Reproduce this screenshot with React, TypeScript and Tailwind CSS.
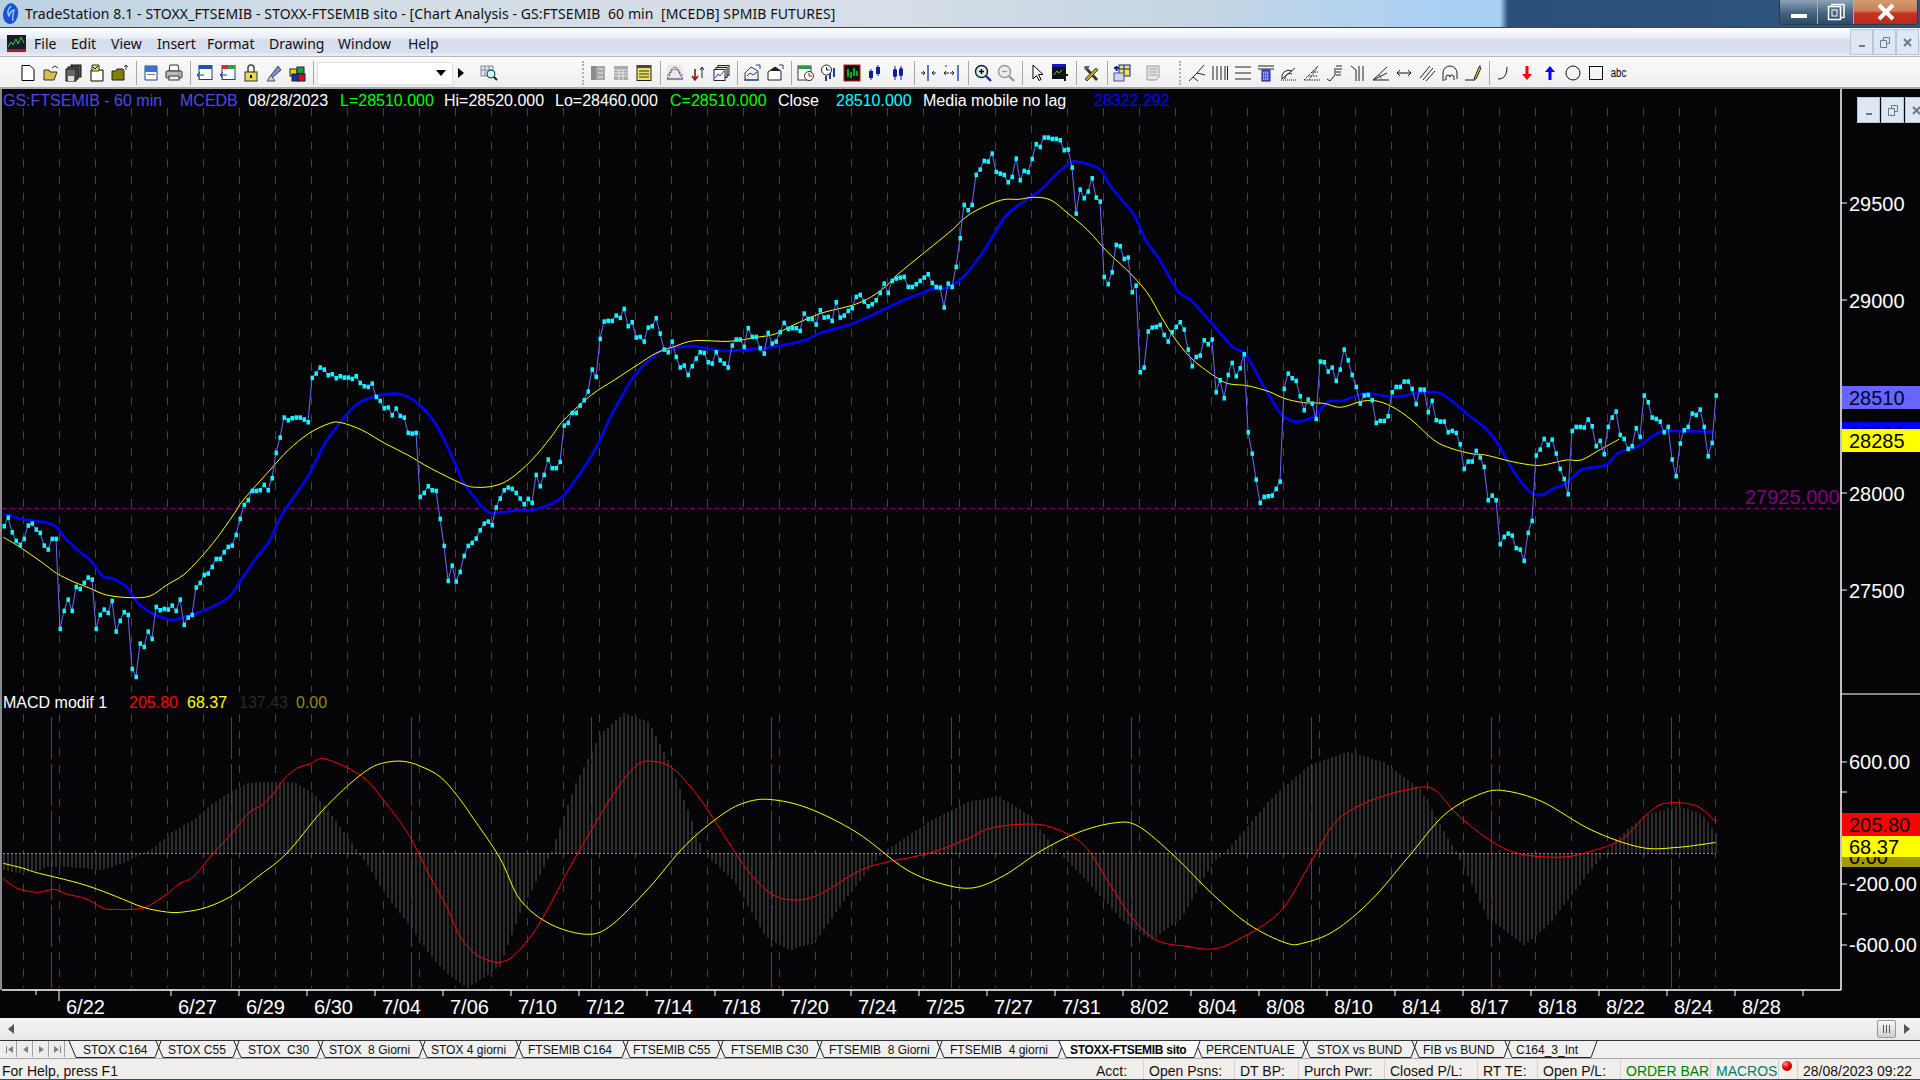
import React from "react";

type P = [number, number];
const pairs = (n: number[], f: (x: number, y: number) => P): P[] => {
  const o: P[] = [];
  for (let i = 0; i + 1 < n.length; i += 2) o.push(f(n[i], n[i + 1]));
  return o;
};
const fa = (x: number, y: number): P => [x / 3, 480 + y / 3];
const fb = (x: number, y: number): P => [270 + x / 2.178, 280 + y / 3];
const fc = (x: number, y: number): P => [950 + x / 2.036, 120 + y / 3];
const fd = (x: number, y: number): P => [x * 1.2245, y * 1.2245];
const fm = (x: number, y: number): P => [x / 3, 680 + y / 3];

const dotsA = pairs([10,138,22,112,34,156,46,182,58,194,70,176,82,136,94,130,106,148,118,158,130,196,142,208,154,176,166,176,178,446,190,392,202,358,214,392,226,320,238,326,250,308,262,292,274,298,286,446,298,404,310,388,322,398,334,362,346,454,358,422,370,396,382,404,394,566,406,590,418,490,430,500,442,454,454,476,466,380,478,390,490,386,502,388,514,376,526,392,538,358,550,434,562,412,574,404,586,322,598,308,610,284,622,280,634,260,646,236,658,236,670,216,682,200,694,196,706,164,718,116,730,74,742,60,754,32,766,32,778,30,790,14,802,30], fa);
const dotsB = pairs([4,594,11,518,20,472,29,412,38,420,47,414,55,412,64,412,73,418,82,426,90,293,98,280,107,262,116,268,125,285,134,282,143,294,151,288,160,292,169,292,178,296,186,288,195,308,204,318,213,320,221,310,230,350,239,362,247,384,256,382,265,405,274,385,282,407,291,412,300,458,309,460,317,458,326,650,334,638,343,618,352,630,360,632,369,716,378,797,387,902,395,856,404,904,413,875,421,827,430,797,439,788,448,775,456,750,465,730,474,724,483,735,491,682,499,655,508,630,517,622,526,626,535,638,543,655,552,672,561,656,569,668,578,584,586,618,595,584,604,538,612,564,621,564,630,545,638,436,647,428,656,398,665,398,673,376,682,360,691,334,699,268,708,290,717,176,726,124,734,122,743,122,752,106,760,113,769,86,778,138,787,126,796,172,804,170,813,184,822,142,831,138,839,114,848,160,857,208,866,216,874,184,883,230,892,262,900,256,909,284,918,258,927,235,935,216,944,218,953,246,961,250,970,216,979,240,988,250,997,262,1005,196,1014,178,1023,178,1031,200,1040,144,1049,170,1058,170,1066,204,1075,220,1084,158,1092,190,1101,184,1110,156,1118,128,1127,146,1136,144,1145,144,1153,152,1162,100,1171,116,1180,116,1188,133,1197,90,1206,112,1214,110,1223,122,1232,66,1241,112,1250,106,1258,92,1267,84,1276,50,1284,44,1293,64,1302,78,1310,72,1319,60,1328,38,1337,10,1345,38,1354,2,1362,-5,1371,-8,1380,-10,1388,20,1397,20,1406,12,1414,2,1423,-8,1432,-18,1440,8,1449,20,1458,22,1466,82,1475,10], fb);
const dotsC = pairs([3,500,10,440,18,354,26,254,35,270,43,254,51,164,59,148,67,122,75,124,84,100,92,155,100,160,108,164,116,186,124,170,132,115,141,180,149,152,157,156,165,116,173,72,181,80,189,52,197,52,206,56,214,56,222,60,230,90,238,88,246,142,255,280,263,208,271,234,279,214,287,174,295,232,303,244,312,470,320,492,328,456,336,374,344,378,352,416,360,412,368,516,378,496,386,756,393,742,401,634,409,622,417,620,426,614,434,644,442,664,450,636,458,620,466,606,474,628,484,688,491,738,499,710,507,706,515,660,523,672,531,658,540,816,548,780,556,834,564,764,572,728,580,768,588,744,597,702,605,936,613,1000,621,1078,629,1148,637,1130,645,1128,653,1126,661,1106,669,1084,678,806,686,760,694,774,703,782,711,828,719,870,727,838,735,850,743,896,751,724,759,726,767,754,776,742,784,782,792,748,800,688,808,720,816,764,825,800,833,850,841,826,849,824,857,840,865,908,873,902,881,902,889,888,898,816,906,800,914,800,922,784,930,784,938,806,946,852,954,808,962,808,970,876,979,842,987,900,995,904,1003,904,1011,936,1019,932,1027,938,1037,972,1045,1046,1053,1024,1061,1024,1069,992,1077,1012,1085,1040,1094,1140,1102,1126,1110,1140,1118,1272,1126,1250,1134,1240,1142,1246,1150,1284,1158,1288,1167,1322,1175,1238,1183,1202,1191,1006,1199,988,1207,956,1215,974,1223,958,1232,1000,1240,1046,1248,1076,1256,1122,1265,932,1273,920,1281,920,1289,922,1297,898,1305,918,1313,978,1321,962,1330,1002,1338,920,1346,892,1354,874,1362,944,1370,956,1379,986,1387,978,1395,924,1403,950,1411,826,1419,846,1428,892,1436,896,1444,904,1452,936,1460,920,1468,1018,1476,1068,1484,970,1493,930,1501,920,1509,880,1517,884,1525,868,1533,920,1542,1008,1550,968,1558,826], fc);
const price: P[] = [...dotsA, ...dotsB, ...dotsC].map(([x, y]) => [Math.round(x / 4) * 4, y] as P);

const blue: P[] = [
  ...pairs([10,102,25,104,60,116,100,122,140,128,168,140,190,168,230,208,270,240,290,265,310,290,340,296,380,320,400,350,420,375,460,402,490,413,520,420,550,412,590,400,650,374,690,348,720,305,770,232,805,190], fa),
  ...pairs([0,780,30,695,80,595,120,490,160,415,190,372,225,350,260,341,290,345,320,368,360,430,400,540,420,605,450,660,475,697,500,698,540,690,575,689,630,658,660,610,690,550,715,490,740,415,770,340,795,285,830,235,860,208,900,200,925,198,960,207,1000,213,1060,206,1100,200,1160,183,1200,158,1260,135,1320,100,1380,60,1420,40,1440,28,1470,24], fb),
  ...pairs([0,500,20,480,45,440,70,390,95,330,115,285,150,245,185,210,215,165,245,128,265,127,305,148,325,195,350,240,375,285,400,365,425,415,465,515,490,540,530,605,575,680,600,700,630,775,670,875,695,902,720,902,745,885,770,845,800,842,845,820,900,830,950,820,985,816,1010,830,1060,890,1090,925,1115,970,1150,1060,1185,1120,1210,1122,1230,1105,1255,1090,1285,1050,1335,1035,1360,1000,1400,980,1440,940,1465,933,1555,935], fc),
];
const yellow: P[] = [
  ...pairs([10,172,50,195,90,222,130,250,170,280,220,305,270,325,320,345,390,353,450,348,500,315,550,285,600,235,650,175,700,105,730,60,780,0], fa).slice(0, 16),
  ...pairs([0,570,40,510,85,460,130,430,155,428,200,450,250,490,300,525,350,565,420,612,450,622,490,617,525,595,570,540,610,475,640,420,700,345,750,300,800,255,840,220,880,200,925,182,1000,184,1060,172,1100,162,1140,135,1200,100,1270,75,1310,50,1345,15,1370,-20], fb),
  ...pairs([0,335,25,300,55,270,105,240,140,238,170,232,205,240,240,280,280,330,320,395,360,450,400,515,430,590,460,660,495,720,545,775,570,792,605,797,650,815,680,835,720,848,760,850,795,862,835,845,865,842,900,860,940,900,985,960,1020,985,1065,1002,1090,1005,1145,1025,1190,1036,1215,1033,1255,1020,1285,1020,1320,992,1362,958], fc),
];
const macdRed: P[] = [
  ...pairs([10,595,30,612,60,628,110,637,140,632,165,628,200,642,260,657,310,685,350,688,400,688,440,680,500,643,540,610,580,590,640,520,700,455,745,400,790,372,825,335,850,300,890,265,930,252,955,238,980,238,1040,262,1100,300,1150,360,1200,425,1235,480,1290,590,1340,680,1380,770,1430,825,1480,845,1500,847], fm),
  ...pairs([420,780,440,755,470,700,500,650,520,625,535,622,550,628,570,650,590,680,610,710,630,730,650,735,670,730,700,712,720,705,745,700,765,695,790,685,810,676,840,673,860,676,885,690,905,720,925,750,945,768,970,773,990,775,1010,768,1045,745,1070,705,1090,672,1110,658,1130,650,1150,645,1170,644,1190,665,1215,685,1240,697,1275,700,1300,695,1325,685,1345,665,1360,656,1385,658,1401,671], fd),
];
const macdYellow: P[] = [
  ...pairs([10,550,70,565,110,578,200,600,270,620,350,650,430,682,500,696,550,696,620,682,700,645,780,585,860,520,960,400,1040,320,1110,265,1160,247,1210,244,1260,258,1320,290,1370,345,1420,415,1500,535], fm),
  ...pairs([425,735,450,755,480,763,500,755,530,725,560,690,590,665,610,655,630,653,660,660,700,680,740,710,770,722,795,725,820,715,850,695,880,680,910,672,930,675,960,700,990,730,1020,755,1050,770,1065,770,1090,760,1120,735,1150,700,1180,665,1210,648,1230,646,1260,655,1300,678,1340,692,1370,692,1401,688], fd),
];
const histEnv: P[] = [
  ...pairs([10,570,60,580,100,575,150,560,220,562,300,570,370,550,430,520,460,505,510,460,580,420,640,370,700,330,745,308,830,305,880,305,940,340,980,385,1020,440,1060,495,1075,519,1100,550,1160,650,1230,735,1290,825,1340,880,1400,925,1450,895,1500,860], fm),
  ...pairs([425,745,450,697,470,640,490,600,510,582,530,590,550,630,575,697,600,720,625,765,645,776,665,770,690,735,720,697,760,670,790,655,815,650,840,665,865,697,890,722,915,750,940,768,965,750,990,705,1000,697,1040,650,1070,625,1100,614,1130,622,1160,645,1190,697,1215,750,1245,772,1265,755,1300,710,1320,685,1345,665,1370,658,1390,665,1401,680], fd),
];
const env = (x: number) => {
  for (let i = 1; i < histEnv.length; i++) {
    const [x0, y0] = histEnv[i - 1];
    const [x1, y1] = histEnv[i];
    if (x <= x1) return y0 + ((Math.max(x, x0) - x0) / (x1 - x0)) * (y1 - y0);
  }
  return histEnv[histEnv.length - 1][1];
};
const poly = (p: P[]) => p.map(([x, y]) => `${x.toFixed(1)},${y.toFixed(1)}`).join(" ");
const smooth = (p: P[]) => {
  let d = `M${p[0][0].toFixed(1)} ${p[0][1].toFixed(1)}`;
  for (let i = 0; i + 1 < p.length; i++) {
    const a = p[Math.max(i - 1, 0)];
    const b = p[i];
    const c = p[i + 1];
    const e = p[Math.min(i + 2, p.length - 1)];
    const c1x = b[0] + (c[0] - a[0]) / 6;
    const c1y = b[1] + (c[1] - a[1]) / 6;
    const c2x = c[0] - (e[0] - b[0]) / 6;
    const c2y = c[1] - (e[1] - b[1]) / 6;
    d += `C${c1x.toFixed(1)} ${c1y.toFixed(1)} ${c2x.toFixed(1)} ${c2y.toFixed(1)} ${c[0].toFixed(1)} ${c[1].toFixed(1)}`;
  }
  return d;
};
const range = (n: number) => Array.from({ length: n }, (_, i) => i);
const grid = range(48).map((k) => 23.5 + 36 * k);
const teal = range(10).map((k) => 51.5 + 180 * k);
const bars = range(429).map((k) => 4 + 4 * k);
const dates = ["6/27","6/29","6/30","7/04","7/06","7/10","7/12","7/14","7/18","7/20","7/24","7/25","7/27","7/31","8/02","8/04","8/08","8/10","8/14","8/17","8/18","8/22","8/24","8/28"];

function Chart() {
  return (
    <svg viewBox="0 89 1920 929" className="absolute inset-0 w-[1920px] h-[929px] block">
      <rect x="0" y="89" width="2" height="901" fill="#8a8a8a" />
      {grid.map((x) => (
        <g key={x} stroke="#444444" strokeWidth="1" strokeDasharray="8 9">
          <line x1={x} x2={x} y1="108" y2="692" />
          <line x1={x} x2={x} y1="714" y2="988" />
        </g>
      ))}
      {bars.map((x) => {
        const y = env(x);
        return <rect key={x} x={x - 1} y={Math.round(Math.min(y, 853))} width="2" height={Math.round(Math.abs(y - 853))} fill="#2c2c2c" />;
      })}
      {teal.map((x) => (
        <line key={x} x1={x} x2={x} y1="717" y2="988" stroke="#0f5f62" strokeDasharray="42 5" />
      ))}
      <line x1="3" x2="1836" y1="508.5" y2="508.5" stroke="#8a008a" strokeDasharray="4 4" />
      <text x="1745" y="504" fontSize="20" fill="#800080">27925.000</text>
      <path d={smooth(blue)} fill="none" stroke="#0000ff" strokeWidth="2.6" strokeLinejoin="round" />
      <path d={smooth(yellow)} fill="none" stroke="#ffff00" strokeWidth="1" />
      <polyline points={poly(price)} fill="none" stroke="#6a6aff" strokeWidth="1" />
      {price.map(([x, y], i) => (
        <rect key={i} x={x - 1.5} y={y - 2} width="3.5" height="4.5" fill="#00ffff" />
      ))}
      <line x1="3" x2="1716" y1="853.5" y2="853.5" stroke="#a3a300" strokeDasharray="2 2" />
      <path d={smooth(macdRed)} fill="none" stroke="#ff0000" strokeWidth="1" />
      <path d={smooth(macdYellow)} fill="none" stroke="#ffff00" strokeWidth="1" />
      {/* axes */}
      <line x1="1841" x2="1841" y1="89" y2="990" stroke="#fff" strokeWidth="1.5" />
      <line x1="2" x2="1841" y1="990" y2="990" stroke="#fff" strokeWidth="1.5" />
      <line x1="1841" x2="1920" y1="694" y2="694" stroke="#fff" />
      <line x1="36" x2="36" y1="990" y2="995" stroke="#fff" />
      <line x1="59" x2="59" y1="990" y2="1001" stroke="#fff" />
      <text x="66" y="1014" fontSize="20" fill="#fff">6/22</text>
      {dates.map((d, i) => (
        <g key={d}>
          <line x1={171 + 68 * i} x2={171 + 68 * i} y1="990" y2="996" stroke="#fff" />
          <text x={178 + 68 * i} y="1014" fontSize="20" fill="#fff">{d}</text>
        </g>
      ))}
      <line x1="1803" x2="1803" y1="990" y2="996" stroke="#fff" />
      {[203, 300, 396, 493, 590].map((y) => (
        <line key={y} x1="1841" x2="1847" y1={y} y2={y} stroke="#fff" />
      ))}
      {[762, 792, 884, 914, 945].map((y) => (
        <line key={y} x1="1841" x2="1847" y1={y} y2={y} stroke="#fff" />
      ))}
      {[["29500", 203], ["29000", 300], ["28000", 493], ["27500", 590]].map(([t, y]) => (
        <text key={t} x="1849" y={(y as number) + 8} fontSize="20" fill="#fff">{t}</text>
      ))}
      <rect x="1842" y="386" width="78" height="23" fill="#6666ff" />
      <text x="1849" y="405" fontSize="20" fill="#000033">28510</text>
      <rect x="1842" y="422" width="78" height="23" fill="#0000ff" />
      <text x="1849" y="441" fontSize="20" fill="#000033">28322</text>
      <rect x="1842" y="429" width="78" height="23" fill="#ffff00" />
      <text x="1849" y="448" fontSize="20" fill="#000">28285</text>
      <text x="1849" y="769" fontSize="20" fill="#fff">600.00</text>
      <text x="1849" y="891" fontSize="20" fill="#fff">-200.00</text>
      <text x="1849" y="952" fontSize="20" fill="#fff">-600.00</text>
      <rect x="1842" y="843" width="78" height="24" fill="#a09a00" />
      <text x="1849" y="864" fontSize="20" fill="#000">0.00</text>
      <rect x="1842" y="813" width="78" height="23" fill="#ff0000" />
      <text x="1849" y="832" fontSize="20" fill="#000">205.80</text>
      <rect x="1842" y="836" width="78" height="21" fill="#ffff00" />
      <text x="1849" y="854" fontSize="20" fill="#000">68.37</text>
    </svg>
  );
}

function Ic({ children }: { children: React.ReactNode }) {
  return (
    <div className="w-[23px] h-[30px] shrink-0 flex items-center justify-center">
      <svg width="18" height="18" viewBox="0 0 18 18" fill="none">{children}</svg>
    </div>
  );
}
const Sep = () => <div className="w-px h-[24px] bg-[#a8a8a8] ml-[5px] mr-[2px] shrink-0" />;
const Grip = () => <div className="w-[2px] h-[24px] border-l-2 border-dotted border-[#b0b0b0] shrink-0" />;
const G = "#9a9a9a";

const icons: Record<string, React.ReactNode> = {
  new: <path d="M3 1.5h8l4 4v11H3z" fill="#fff" stroke="#000" />,
  open: <><path d="M2 6h5l1 2h7l-3 8H2z" fill="#d8c050" stroke="#333" /><path d="M10 4l3-2 3 2" stroke="#333" /></>,
  save: <><rect x="6" y="1" width="10" height="12" fill="#555" stroke="#111" /><rect x="3" y="3" width="10" height="12" fill="#777" stroke="#111" /><rect x="1" y="5" width="10" height="12" fill="#666" stroke="#111" /><rect x="3" y="12" width="6" height="5" fill="#ddd" /></>,
  chk: <><path d="M3 6h12v11H3z" fill="#fff" stroke="#000" /><path d="M4 1h7v6H4z" fill="#e8e060" stroke="#333" /><path d="M5 3l2 2 3-3" stroke="#000" /></>,
  box: <><path d="M1 7h4l1-2h6l1 2v9H1z" fill="#808000" stroke="#222" /><path d="M15 6V1m-2 2l2-2 2 2" stroke="#334" /></>,
  page: <><path d="M3 2h12v14H3z" fill="#fff" stroke="#14408c" /><rect x="3" y="2" width="12" height="6" fill="#3f6fd0" /><rect x="5" y="10" width="8" height="1" fill="#777" /></>,
  print: <><path d="M5 1h8l1 6H4z" fill="#fff" stroke="#333" /><rect x="1" y="7" width="16" height="7" rx="1" fill="#bbb" stroke="#333" /><rect x="4" y="12" width="10" height="4" fill="#eee" stroke="#333" /><rect x="12" y="9" width="3" height="1" fill="#c90" /></>,
  winb: <><rect x="3" y="1.5" width="13" height="14" fill="#fff" stroke="#14408c" /><rect x="3" y="1" width="13" height="4" fill="#1a55b0" /><path d="M8 11H1m3-3l-3 3 3 3" stroke="#14408c" /></>,
  winc: <><rect x="3" y="1.5" width="13" height="14" fill="#fff" stroke="#14408c" /><rect x="3" y="1" width="6" height="4" fill="#d03030" /><rect x="9" y="1" width="7" height="4" fill="#30a040" /><path d="M8 11H1m3-3l-3 3 3 3" stroke="#14408c" /></>,
  lock: <><path d="M6 8V4a3 3 0 016 0v4" stroke="#444" strokeWidth="1.5" /><rect x="3" y="8" width="12" height="9" fill="#e8d850" stroke="#333" /><rect x="8" y="11" width="2" height="3" fill="#000" /></>,
  dish: <><path d="M4 14L13 2l3 4-9 8z" fill="#7a8fd0" stroke="#445" /><path d="M2 17l4-6 4 6z" fill="#ccc" stroke="#555" /></>,
  cubes: <><rect x="2" y="5" width="7" height="7" fill="#e8d020" stroke="#222" /><rect x="9" y="3" width="7" height="7" fill="#10a040" stroke="#222" /><rect x="4" y="10" width="7" height="7" fill="#1030c0" stroke="#222" /><rect x="10" y="10" width="7" height="7" fill="#d01020" stroke="#222" /></>,
  find: <><rect x="1" y="2" width="12" height="10" fill="#dfe6f0" stroke="#889" /><path d="M1 6h12M5 2v10M9 2v10" stroke="#889" /><circle cx="11" cy="10" r="4" fill="#bfe" stroke="#234" /><path d="M14 13l3 3" stroke="#222" strokeWidth="2" /></>,
  gd: <><rect x="2" y="2" width="14" height="14" fill="#a8a8a8" /><rect x="2" y="2" width="5" height="14" fill="#8c8c8c" /><path d="M9 5h5M9 9h5M9 13h5" stroke="#e8e8e8" /></>,
  gt: <><rect x="2" y="2" width="14" height="14" fill="#aaa" /><path d="M2 6h14M2 9h14M2 12h14M7 6v10M11 6v10" stroke="#e8e8e8" /></>,
  ytab: <><rect x="2" y="1.5" width="14" height="15" fill="#f0e060" stroke="#222" /><rect x="2" y="1" width="14" height="3" fill="#445" /><path d="M4 7h10M4 10h10M4 13h10" stroke="#333" /></>,
  wave: <><rect x="1" y="1" width="16" height="16" fill="#e8e8e8" /><path d="M1 14c3 0 3-9 8-9s5 9 8 9" stroke="#1a30c0" strokeDasharray="2 1" /><path d="M1 11c3 0 4-8 8-8s4 8 8 8" stroke="#d02020" strokeDasharray="2 1" /><path d="M1 15h16" stroke="#333" /></>,
  arr: <><path d="M6 5v10m-3-3l3 4 3-4" stroke="#901010" strokeWidth="1.6" /><path d="M13 14V3m-2 3l2-3 2 3" stroke="#222" /></>,
  stack: <><rect x="6" y="1.5" width="11" height="10" fill="#ddd" stroke="#222" /><rect x="4" y="3.5" width="11" height="10" fill="#eee" stroke="#222" /><rect x="2" y="5.5" width="11" height="11" fill="#fff" stroke="#222" /><path d="M3 14l3-4 2 2 4-5" stroke="#1a50d0" /></>,
  wch: <><path d="M2 9l6-6 7 4v9H2z" fill="#eee" stroke="#334" /><path d="M4 12l3-3 3 2 4-3" stroke="#14408c" /><path d="M1 16h15" stroke="#14408c" /><path d="M13 1h4v4" stroke="#14408c" /></>,
  wblk: <><path d="M2 8l7-5 6 4v9H2z" fill="#fff" stroke="#222" /><path d="M2 8l7-5 6 4H2z" fill="#222" /><path d="M13 1h4v4" stroke="#14408c" /></>,
  cal: <><rect x="1" y="2" width="13" height="14" fill="#fff" stroke="#333" /><rect x="1" y="2" width="13" height="3" fill="#20a040" /><circle cx="12" cy="12" r="4.5" fill="#fff" stroke="#333" /><path d="M12 9v3h3" stroke="#c00" /></>,
  clk: <><circle cx="6.5" cy="6" r="5" fill="#fff" stroke="#222" /><path d="M6.5 3v3h3" stroke="#222" /><path d="M6 12v5M10 9v6M14 4v9" stroke="#223a90" strokeWidth="2" /></>,
  gbar: <><rect x="1" y="1" width="16" height="16" fill="#111" stroke="#c01818" /><path d="M5 5v8M8 8v6M11 4v8M14 7v5" stroke="#20e040" strokeWidth="1.4" /></>,
  cdl: <><path d="M5 5v11M12 1v11" stroke="#102090" /><rect x="3" y="7" width="4" height="7" fill="#102090" /><rect x="10" y="3" width="4" height="7" fill="#102090" /></>,
  cdl2: <><path d="M6 2v14M12 2v14" stroke="#102090" /><rect x="4" y="5" width="4" height="8" rx="1.5" fill="#102090" /><rect x="10" y="4" width="4" height="8" rx="1.5" fill="#102090" /></>,
  vl: <><path d="M8 1v16" stroke="#2040a0" strokeWidth="1.4" /><path d="M1 9h4m-2-2l2 2-2 2M16 9h-4m2-2l-2 2 2 2" stroke="#222" /></>,
  vr: <><path d="M15 1v16" stroke="#2040a0" strokeWidth="1.4" /><path d="M3 1v2" stroke="#222" /><path d="M1 9h5M3 7l-2 2 2 2M11 9H7m2-2l2 2-2 2" stroke="#222" /></>,
  zin: <><circle cx="7.5" cy="7.5" r="6" fill="#d8f0e8" stroke="#123" strokeWidth="1.5" /><path d="M5 7.5h5M7.5 5v5" stroke="#000" strokeWidth="1.4" /><path d="M12 12l5 5" stroke="#1828a0" strokeWidth="2.4" /></>,
  zout: <><circle cx="7.5" cy="7.5" r="6" fill="#eee" stroke={G} strokeWidth="1.5" /><path d="M5 7.5h5" stroke={G} strokeWidth="1.4" /><path d="M12 12l5 5" stroke={G} strokeWidth="2.4" /></>,
  cur: <path d="M5 1v14l3.5-3.5 2.5 5 2-1-2.5-5H15z" fill="#fff" stroke="#000" />,
  cht: <><rect x="1" y="1" width="14" height="14" fill="#111" /><rect x="1" y="0" width="14" height="3" fill="#1818c8" /><path d="M3 11l3-4 2 2 3-3" stroke="#20e040" /><path d="M11 10h6v2h-2v5h-2v-5h-2z" fill="#111" /></>,
  tool: <><path d="M4 2l12 13-2 2L2 4z" fill="#333" /><path d="M14 4L3 15l2 2L16 6z" fill="#c9a020" stroke="#443" /><path d="M2 2h6L5 6z" fill="#666" /></>,
  mgr: <><rect x="6" y="1" width="11" height="11" fill="#f0e060" stroke="#102090" /><path d="M6 5h11M11 1v11" stroke="#102090" /><rect x="1" y="9" width="10" height="8" fill="#c8d4f0" stroke="#556" /><path d="M1 4h5M3.500 2v5" stroke="#102090" strokeWidth="2" /></>,
  gdoc: <><path d="M3 2h12v11l-3 3H3z" fill="#e4e4e4" stroke={G} /><path d="M5 5h8M5 8h8M5 11h8" stroke={G} /></>,
  fork: <path d="M1 17L9 9l7-8M5 13l5 4M9 9l8 2" stroke="#222" />,
  vlines: <path d="M2 2v14M6 2v14M10 2v14M14 2v14M16.500 2v14" stroke="#222" />,
  hlines: <path d="M1 3h16M1 9h16M1 15h16" stroke="#222" strokeWidth="1.2" />,
  calc: <><path d="M1 2h16M1 5h16" stroke="#222" /><rect x="5" y="6" width="8" height="11" fill="#5566cc" stroke="#102090" /><path d="M6 9h6M6 12h6M6 15h6" stroke="#fff" strokeDasharray="1 1" /></>,
  arc: <><path d="M2 15a7 7 0 0110-8M5 15a5 5 0 017-5" stroke="#222" /><path d="M2 15L15 4" stroke="#222" /><path d="M1 16h16" stroke="#222" strokeDasharray="1 1" /></>,
  fan: <path d="M1 16L15 2M6 16l9-14M1 16h16M5 12h9M9 8h6" stroke="#222" strokeDasharray="1.5 1" />,
  step: <><path d="M1 15l3 2 5-6V4" stroke="#222" /><path d="M10 2h6M10 5h6M10 8h5M10 11h5" stroke="#222" /></>,
  vv: <path d="M2 2l5 4v11M10 2v15M14 2v15" stroke="#222" />,
  ang: <><path d="M1 16L15 3M1 16h16M1 16L15 9" stroke="#222" /><path d="M7 11l3 5" stroke="#222" strokeDasharray="1 1" /></>,
  dbl: <path d="M2 9h14M5 6L2 9l3 3M13 6l3 3-3 3" stroke="#111" />,
  par: <path d="M2 14L12 2M5 16L15 4M8 17L17 7" stroke="#222" />,
  arcs: <><path d="M2 15V9a7 7 0 0114 0v6" stroke="#222" /><path d="M5 16v-3a2 2 0 014 0 2 2 0 014 0v3" stroke="#222" /><path d="M1 16h3" stroke="#222" /></>,
  pen: <><path d="M1 16h10" stroke="#111" /><path d="M10 15L15 3l2 1-5 11z" fill="#e8d030" stroke="#222" /><path d="M15 3l.5-2 2 1z" fill="#a01010" /></>,
  crv: <path d="M3 15c6 0 9-4 9-12" stroke="#111" />,
  red: <path d="M7.500 2h3v8H14l-5 6-5-6h3.500z" fill="#ff0000" />,
  blu: <path d="M7.500 16h3V8H14L9 2 4 8h3.500z" fill="#0000ff" />,
  cir: <circle cx="9" cy="9" r="7" stroke="#111" />,
  sq: <rect x="2.500" y="2.500" width="13" height="13" stroke="#111" />,
};

const I = ({ n }: { n: string }) => <Ic>{icons[n]}</Ic>;

function Toolbar() {
  return (
    <div className="h-[32px] shrink-0 flex items-center pl-[16px] pt-[2px] bg-[linear-gradient(180deg,#fbfbfb,#eeeeee)] border-b-2 border-[#a8a8a8]">
      {["new", "open", "save", "chk", "box"].map((n) => <I key={n} n={n} />)}
      <Sep />
      {["page", "print"].map((n) => <I key={n} n={n} />)}
      <Sep />
      {["winb", "winc", "lock", "dish", "cubes"].map((n) => <I key={n} n={n} />)}
      <Sep />
      <div className="w-[136px] h-[23px] ml-[1px] bg-white rounded-[2px] border border-[#e0e0e0] shrink-0 flex items-center justify-end pr-[6px]">
        <svg width="10" height="6" viewBox="0 0 10 6"><path d="M0 0h10L5 6z" fill="#000" /></svg>
      </div>
      <svg width="6" height="10" viewBox="0 0 6 10" className="ml-[5px] shrink-0"><path d="M0 0l6 5-6 5z" fill="#000" /></svg>
      <div className="w-[13px] shrink-0" />
      <I n="find" />
      <div className="w-[82px] shrink-0" />
      <Grip />
      <div className="w-[2px] shrink-0" />
      {["gd", "gt", "ytab"].map((n) => <I key={n} n={n} />)}
      <Sep />
      {["wave", "arr", "stack"].map((n) => <I key={n} n={n} />)}
      <Sep />
      {["wch", "wblk"].map((n) => <I key={n} n={n} />)}
      <Sep />
      {["cal", "clk", "gbar", "cdl", "cdl2"].map((n) => <I key={n} n={n} />)}
      <Sep />
      {["vl", "vr"].map((n) => <I key={n} n={n} />)}
      <Sep />
      {["zin", "zout"].map((n) => <I key={n} n={n} />)}
      <Sep />
      {["cur", "cht"].map((n) => <I key={n} n={n} />)}
      <Sep />
      <I n="tool" />
      <Sep />
      <I n="mgr" />
      <div className="w-[8px] shrink-0" />
      <I n="gdoc" />
      <div className="w-[15px] shrink-0" />
      <Grip />
      <div className="w-[4px] shrink-0" />
      {["fork", "vlines", "hlines", "calc", "arc", "fan", "step", "vv", "ang", "dbl", "par", "arcs", "pen"].map((n) => <I key={n} n={n} />)}
      <Sep />
      {["crv", "red", "blu", "cir", "sq"].map((n) => <I key={n} n={n} />)}
      <div className="w-[23px] text-center text-[12px] text-black shrink-0 font-['Liberation_Sans',sans-serif] scale-x-[0.8]">abc</div>
    </div>
  );
}

function Mdi() {
  const box = "w-[23px] h-[26px] bg-[#dfe7f3] border border-[#b4c8dc] flex items-center justify-center shrink-0";
  return (
    <>
      <div className={box}><div className="w-[6px] h-[2px] bg-[#6a7a8c] mt-[8px]" /></div>
      <div className={box}>
        <svg width="10" height="11" viewBox="0 0 10 11" fill="none"><path d="M3.500 3V.5h6v6H7M.5 3.500h6v7h-6z" stroke="#6a7a8c" /></svg>
      </div>
      <div className={box}>
        <svg width="9" height="9" viewBox="0 0 9 9"><path d="M1 1l7 7M8 1L1 8" stroke="#6a7a8c" strokeWidth="2" /></svg>
      </div>
    </>
  );
}

const tabs: [string, number, number][] = [
  ["STOX C164", 87, 14], ["STOX C55", 78, 12], ["STOX  C30", 84, 14], ["STOX  8 Giorni", 102, 11], ["STOX 4 giorni", 96, 11],
  ["FTSEMIB C164", 107, 12], ["FTSEMIB C55", 95, 10], ["FTSEMIB C30", 99, 13], ["FTSEMIB  8 Giorni", 120, 12], ["FTSEMIB  4 giorni", 122, 13],
  ["STOXX-FTSEMIB sito", 136, 11], ["PERCENTUALE", 108, 11], ["STOX vs BUND", 109, 14], ["FIB vs BUND", 93, 11], ["C164_3_Int", 87, 11],
];

function NavBtn({ d }: { d: string }) {
  return (
    <div className="w-[15px] h-[16px] mr-[1px] bg-[#ececec] border-r border-[#a0a0a0] flex items-center justify-center shrink-0">
      <svg width="9" height="9" viewBox="0 0 9 9"><path d={d} fill="#808080" /></svg>
    </div>
  );
}

function Tabs() {
  return (
    <div className="h-[19px] shrink-0 flex border-t border-[#333] border-b border-b-[#a8a8a8] bg-[#f0f0f0] text-[12px] leading-[19px] text-[#111] whitespace-pre overflow-hidden">
      <div className="w-[69px] flex items-start pl-[2px] shrink-0">
        <NavBtn d="M1 1h1v7H1zM8 1v7L3 4.500z" />
        <NavBtn d="M7 1v7L2 4.500z" />
        <NavBtn d="M2 1v7l5-3.500z" />
        <NavBtn d="M8 1h-1v7h1zM1 1v7l5-3.500z" />
      </div>
      {tabs.map(([t, w, pl], i) => {
        const active = i === 10;
        return (
          <div key={t} className={active ? "relative shrink-0 font-bold text-black z-10 tracking-[-0.3px]" : "relative shrink-0"} style={{ width: w, paddingLeft: pl }}>
            <svg className="absolute left-0 top-0 overflow-visible" width={w + 6} height="17" fill={active ? "#ffffff" : "none"}>
              <path d={`M0 0L7 16.500H${w - 1}L${w + 5} 0`} stroke="#222" />
            </svg>
            <span className="relative">{t}</span>
          </div>
        );
      })}
    </div>
  );
}

const panes: [string, number, string?][] = [
  ["Open Psns:", 91], ["DT BP:", 64], ["Purch Pwr:", 86], ["Closed P/L:", 93], ["RT TE:", 60], ["Open P/L:", 83],
  ["ORDER BAR", 90, "text-[#008000]"], ["MACROS", 68, "text-[#008060]"],
];

export default function App() {
  return (
    <div className="w-[1920px] h-[1080px] overflow-hidden flex flex-col bg-[#f0f0f0] font-['Liberation_Sans',sans-serif]">
      {/* title bar */}
      <div className="h-[28px] shrink-0 flex items-start border-b border-[#3a4450] bg-[linear-gradient(90deg,#b9d0e2_0px,#d3dde6_300px,#d6dee6_900px,#c5d5e3_1200px,#a9d1f5_1450px,#a9d1f5_1500px,#2a4f78_1508px,#2f5680_1920px)]">
        <svg width="18" height="24" viewBox="0 0 18 24" className="ml-[2px] mt-[2px] shrink-0">
          <path d="M9 1c5 1 8 6 7 12-1 5-4 9-8 9S1 18 1 13 4 2 9 1z" fill="#1d4fd0" />
          <path d="M9 4c-3 3-4 7-2 10 1-3 2-6 5-6-1 4-2 8-1 11" stroke="#8fd0ff" strokeWidth="1.4" fill="none" />
        </svg>
        <div className="ml-[5px] h-[27px] leading-[28px] text-[14px] tracking-[0.1px] text-[#111] whitespace-pre font-['Noto_Sans',sans-serif] flex-1">
          TradeStation 8.1 - STOXX_FTSEMIB - STOXX-FTSEMIB sito - [Chart Analysis - GS:FTSEMIB  60 min  [MCEDB] SPMIB FUTURES]
        </div>
        <div className="flex mr-[2px] h-[25px] shrink-0 rounded-b-[4px] overflow-hidden border border-t-0 border-[#2a3a4e]">
          <div className="w-[38px] bg-[linear-gradient(180deg,#8ea2b4,#45627f_55%,#2d4a68)] border-r border-[#9fb2c4] flex items-center justify-center">
            <div className="w-[16px] h-[4px] bg-white mt-[8px]" />
          </div>
          <div className="w-[36px] bg-[linear-gradient(180deg,#8ea2b4,#45627f_55%,#2d4a68)] border-r border-[#9fb2c4] flex items-center justify-center">
            <svg width="18" height="18" viewBox="0 0 18 18" fill="none"><path d="M5 3.500V1.500h12v13h-3" stroke="#fff" strokeWidth="1.5" /><rect x="1.500" y="3.500" width="12" height="13" stroke="#fff" strokeWidth="1.5" /><rect x="5" y="7" width="5" height="6" stroke="#fff" /></svg>
          </div>
          <div className="w-[63px] bg-[linear-gradient(180deg,#d69a70,#c88058_45%,#c8321f_55%,#b82a1c)] flex items-center justify-center">
            <svg width="18" height="18" viewBox="0 0 18 18"><path d="M2 2l14 14M16 2L2 16" stroke="#fff" strokeWidth="4" /></svg>
          </div>
        </div>
      </div>
      {/* menu */}
      <div className="h-[29px] shrink-0 flex items-center pt-[2px] bg-[linear-gradient(180deg,#fdfefe,#e9eef6_35%,#d6ddec_42%,#d8dfee_85%,#eceff6)] border-b border-[#b8b8b8] text-[14px] text-[#111] font-['Noto_Sans',sans-serif]">
        <svg width="19" height="17" viewBox="0 0 19 17" className="ml-[7px] shrink-0">
          <rect width="19" height="17" fill="#1a1a28" />
          <rect y="14" width="19" height="3" fill="#a02020" />
          <path d="M1 12l3-5 2 3 3-6 2 5 3-7 3 6" stroke="#30d050" fill="none" />
        </svg>
        <span className="ml-[8px] w-[37px]">File</span>
        <span className="w-[40px]">Edit</span>
        <span className="w-[46px]">View</span>
        <span className="w-[50px]">Insert</span>
        <span className="w-[62px]">Format</span>
        <span className="w-[69px]">Drawing</span>
        <span className="w-[70px]">Window</span>
        <span className="flex-1">Help</span>
        <div className="flex -mt-[2px] mr-[1px] shrink-0"><Mdi /></div>
      </div>
      <Toolbar />
      {/* chart */}
      <div className="relative h-[929px] shrink-0 bg-[#050508] overflow-hidden">
        <Chart />
        <div className="absolute left-[3px] top-[1px] flex h-[22px] leading-[22px] text-[16px] whitespace-pre">
          <span className="w-[177px] text-[#4a4ae8]">GS:FTSEMIB - 60 min</span>
          <span className="w-[68px] text-[#4a4ae8]">MCEDB</span>
          <span className="w-[92px] text-white">08/28/2023</span>
          <span className="w-[104px] text-[#00ff00]">L=28510.000</span>
          <span className="w-[111px] text-white">Hi=28520.000</span>
          <span className="w-[115px] text-white">Lo=28460.000</span>
          <span className="w-[108px] text-[#00ff00]">C=28510.000</span>
          <span className="w-[58px] text-white">Close</span>
          <span className="w-[87px] text-[#00ffff]">28510.000</span>
          <span className="w-[171px] text-white">Media mobile no lag</span>
          <span className="text-[#0000ff]">28322.292</span>
        </div>
        <div className="absolute left-[3px] top-[603px] flex h-[22px] leading-[22px] text-[16px] whitespace-pre">
          <span className="w-[126px] text-white">MACD modif 1</span>
          <span className="w-[58px] text-[#ff0000]">205.80</span>
          <span className="w-[52px] text-[#ffff00]">68.37</span>
          <span className="w-[57px] text-[#2a2a2a]">137.43</span>
          <span className="text-[#8f8f00]">0.00</span>
        </div>
        <div className="absolute left-[1857px] top-[8px] flex gap-[1px] w-[70px]">
          <Mdi />
        </div>
      </div>
      {/* horizontal scrollbar */}
      <div className="h-[22px] shrink-0 flex items-center bg-[linear-gradient(180deg,#f2f2f2,#e8e8e8)] pl-[8px]">
        <svg width="6" height="10" viewBox="0 0 6 10" className="shrink-0"><path d="M6 0L0 5l6 5z" fill="#555" /></svg>
        <div className="flex-1" />
        <div className="w-[19px] h-[18px] rounded-[2px] bg-[linear-gradient(180deg,#f6f6f6,#d0d0d0)] border border-[#9a9a9a] flex items-center justify-center gap-[2px] shrink-0">
          <div className="w-px h-[8px] bg-[#555]" /><div className="w-px h-[8px] bg-[#555]" /><div className="w-px h-[8px] bg-[#555]" />
        </div>
        <svg width="6" height="10" viewBox="0 0 6 10" className="ml-[8px] mr-[10px] shrink-0"><path d="M0 0l6 5-6 5z" fill="#555" /></svg>
      </div>
      <Tabs />
      {/* status */}
      <div className="h-[20px] shrink-0 flex items-start bg-[#f1eeec] text-[14px] leading-[24px] text-[#111] whitespace-pre">
        <div className="flex-1 h-full pl-[2px]">For Help, press F1</div>
        <div className="w-[52px] h-full pl-[5px]">Acct:</div>
        {panes.map(([t, w, c]) => (
          <div key={t} className={`h-full border-l border-[#d6d2ce] pl-[5px] ${c ?? ""}`} style={{ width: w }}>{t}</div>
        ))}
        <div className="w-[19px] h-full border-l border-[#d6d2ce] flex items-start pl-[3px] pt-[2px]">
          <div className="w-[10px] h-[10px] rounded-full bg-[radial-gradient(circle_at_35%_30%,#ff9090,#e00000_45%,#800000)]" />
        </div>
        <div className="w-[123px] h-full border-l border-[#d6d2ce] pl-[5px]">28/08/2023 09:22</div>
      </div>
      <div className="flex-1 bg-[#3a4a5e]" />
    </div>
  );
}
